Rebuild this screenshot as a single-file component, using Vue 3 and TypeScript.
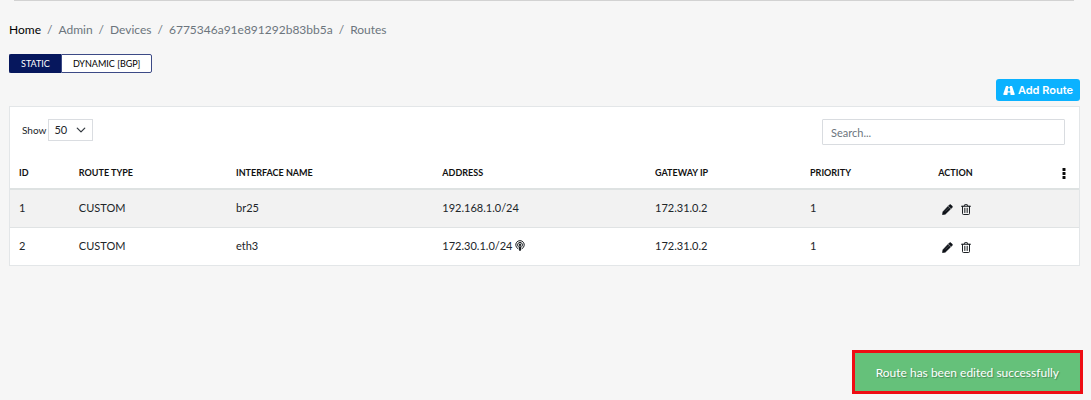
<script setup lang="ts">
import { ref } from 'vue'

interface Route {
  id: number
  type: string
  iface: string
  address: string
  advertised: boolean
  gateway: string
  priority: number
}

const crumbs = ['Admin', 'Devices', '6775346a91e891292b83bb5a', 'Routes']
const pageSize = ref('50')
const search = ref('')
const tab = ref<'static' | 'dynamic'>('static')
const routes: Route[] = [
  { id: 1, type: 'CUSTOM', iface: 'br25', address: '192.168.1.0/24', advertised: false, gateway: '172.31.0.2', priority: 1 },
  { id: 2, type: 'CUSTOM', iface: 'eth3', address: '172.30.1.0/24', advertised: true, gateway: '172.31.0.2', priority: 1 },
]
</script>

<template>
  <div class="page">
    <hr class="rule" />
    <nav class="crumbs" aria-label="Breadcrumb">
      <a href="#" class="home">Home</a>
      <template v-for="c in crumbs" :key="c">
        <span class="sep">/</span><a href="#">{{ c }}</a>
      </template>
    </nav>

    <div class="tabs">
      <button type="button" :class="{ active: tab === 'static' }" @click="tab = 'static'">STATIC</button>
      <button type="button" :class="{ active: tab === 'dynamic' }" @click="tab = 'dynamic'">DYNAMIC [BGP]</button>
    </div>

    <div class="actions">
      <button type="button" class="add">
        <svg viewBox="0 0 576 448" width="12" height="9" aria-hidden="true">
          <path fill="currentColor" d="M152 0h96l-6 64h92L328 0h96q14 0 20 16l128 384q8 48-36 48H366l-12-128H222l-12 128H40Q-4 448 4 400L132 16Q138 0 152 0zM237 118l-10 144h122l-10-144z" />
        </svg>
        <span>Add Route</span>
      </button>
    </div>

    <section class="card">
      <div class="toolbar">
        <label class="show">
          <span>Show</span>
          <span class="select">
            <select v-model="pageSize">
              <option>10</option>
              <option>25</option>
              <option>50</option>
            </select>
            <svg viewBox="0 0 16 16" width="10" height="10" aria-hidden="true">
              <path d="M2 5l6 6 6-6" fill="none" stroke="#343a40" stroke-width="2" stroke-linecap="round" stroke-linejoin="round" />
            </svg>
          </span>
        </label>
        <input v-model="search" class="search" type="text" placeholder="Search..." aria-label="Search" />
      </div>

      <table>
        <colgroup>
          <col class="c-id" /><col class="c-type" /><col class="c-iface" /><col class="c-addr" />
          <col class="c-gw" /><col class="c-prio" /><col class="c-act" /><col class="c-menu" />
        </colgroup>
        <thead>
          <tr>
            <th>ID</th>
            <th>ROUTE TYPE</th>
            <th>INTERFACE NAME</th>
            <th>ADDRESS</th>
            <th>GATEWAY IP</th>
            <th>PRIORITY</th>
            <th>ACTION</th>
            <th class="menu">
              <button type="button" class="icon" aria-label="Columns">
                <svg viewBox="0 0 4 11" width="4" height="11" aria-hidden="true">
                  <g fill="#0b0b0b">
                    <rect x="0.5" width="3" height="3" rx="0.6" />
                    <rect x="0.5" y="4" width="3" height="3" rx="0.6" />
                    <rect x="0.5" y="8" width="3" height="3" rx="0.6" />
                  </g>
                </svg>
              </button>
            </th>
          </tr>
        </thead>
        <tbody>
          <tr v-for="r in routes" :key="r.id">
            <td>{{ r.id }}</td>
            <td>{{ r.type }}</td>
            <td>{{ r.iface }}</td>
            <td>
              <span class="addr">
                {{ r.address }}
                <svg v-if="r.advertised" viewBox="0 0 20 22" width="10" height="11" role="img" aria-label="Advertised">
                  <g fill="none" stroke="#1b1f23" stroke-width="2" stroke-linecap="round">
                    <path d="M6 17.5a8.6 8.6 0 1 1 8 0" />
                    <path d="M6.2 13a5 5 0 1 1 7.6 0" />
                  </g>
                  <circle cx="10" cy="9.5" r="2.5" fill="#1b1f23" />
                  <path d="M7.3 14q0-1.6 2.7-1.6t2.7 1.6l-.9 6.4q-.3 1.4-1.8 1.4t-1.8-1.4z" fill="#1b1f23" />
                </svg>
              </span>
            </td>
            <td>{{ r.gateway }}</td>
            <td>{{ r.priority }}</td>
            <td colspan="2">
              <span class="tools">
                <button type="button" class="icon" aria-label="Edit route">
                  <svg viewBox="0 0 22 22" width="11" height="11" aria-hidden="true">
                    <path d="M14.8 1.8q1.6-1.6 3.2 0l2.2 2.2q1.6 1.6 0 3.2l-2 2-5.4-5.4zM11.8 4.8l5.4 5.4L6.6 20.4.8 21.4l1-5.8z" fill="#0d1117" stroke="#0d1117" stroke-width="1" />
                    <path d="M6.5 15l7-7" stroke="#9a9a9a" stroke-width="0.8" fill="none" />
                  </svg>
                </button>
                <button type="button" class="icon" aria-label="Delete route">
                  <svg viewBox="0 0 20 22" width="10" height="11" aria-hidden="true">
                    <g fill="none" stroke="#1b1f23" stroke-width="2" stroke-linecap="round" stroke-linejoin="round">
                      <path d="M1 4.5h18M6 4.5l1.4-3.1h5.2L14 4.5M3 4.5v14.6q0 1.9 1.9 1.9h10.2q1.9 0 1.9-1.9V4.5" />
                      <path d="M7 8.5v8.5M10 8.5v8.5M13 8.5v8.5" stroke-width="1.4" />
                    </g>
                  </svg>
                </button>
              </span>
            </td>
          </tr>
        </tbody>
      </table>
    </section>

    <div class="toast" role="status">Route has been edited successfully</div>
  </div>
</template>

<style>
body {
  margin: 0;
  background: #f6f6f6;
}
</style>

<style scoped>
.page {
  padding: 0 11px 0 9px;
  font-family: Lato, "Liberation Sans", sans-serif;
  font-size: 11px;
  line-height: 16px;
  color: #212529;
}
button,
input,
select {
  font: inherit;
  color: inherit;
  box-sizing: border-box;
}
button {
  cursor: pointer;
}
.rule {
  height: 1px;
  margin: 0 6px 0 5px;
  border: 0;
  background: #d2d2d2;
}
.crumbs {
  display: flex;
  gap: 6px;
  padding: 21px 0 0;
  font-size: 12px;
  color: #6c757d;
}
.crumbs a {
  color: inherit;
  text-decoration: none;
}
.crumbs .home {
  color: #000;
}
.tabs {
  display: flex;
  margin-top: 16px;
}
.tabs button {
  height: 19px;
  padding: 0 11px;
  border: 1px solid #3c4a86;
  border-radius: 0 2px 2px 0;
  background: #fff;
  font-size: 9px;
  line-height: 16px;
  color: #000;
}
.tabs button:first-child {
  border-radius: 2px 0 0 2px;
  border-right: 0;
}
.tabs button.active {
  background: #06175d;
  border-color: #06175d;
  color: #fff;
}
.actions {
  display: flex;
  justify-content: flex-end;
  margin-top: 6px;
}
.add {
  display: flex;
  align-items: center;
  gap: 3px;
  height: 22px;
  padding: 0 7px;
  border: 0;
  border-radius: 3px;
  background: #0bb2ff;
  color: #fff;
  font-family: Inter, sans-serif;
  font-size: 11px;
  font-weight: 600;
}
.card {
  margin-top: 5px;
  border: 1px solid #e3e6e8;
  background: #fff;
}
.toolbar {
  display: flex;
  align-items: flex-start;
  justify-content: space-between;
  padding: 12px 14px 12px 12px;
}
.show {
  display: flex;
  align-items: center;
  gap: 2px;
  font-size: 10px;
}
.select {
  display: grid;
  align-items: center;
}
.select select,
.select svg {
  grid-area: 1 / 1;
}
.select svg {
  justify-self: end;
  margin-right: 7px;
  pointer-events: none;
}
.select select {
  appearance: none;
  width: 45px;
  height: 22px;
  padding: 0 5px;
  border: 1px solid #dadde1;
  border-radius: 0;
  background: #fff;
  font-size: 11px;
}
.search {
  width: 243px;
  height: 26px;
  padding: 0 8px;
  border: 1px solid #d9dce0;
  border-radius: 1px;
  background: #fff;
}
.search::placeholder {
  color: #6c757d;
  opacity: 1;
}
table {
  width: 100%;
  table-layout: fixed;
  border-collapse: separate;
  border-spacing: 0;
}
.c-id { width: 5.6%; }
.c-type { width: 14.7%; }
.c-iface { width: 19.3%; }
.c-addr { width: 19.9%; }
.c-gw { width: 14.5%; }
.c-prio { width: 12%; }
.c-act { width: 10%; }
.c-menu { width: 4%; }
th,
td {
  height: 37px;
  padding: 0 9px 2px;
  box-sizing: border-box;
  text-align: left;
  white-space: nowrap;
}
th {
  height: 33px;
  padding-bottom: 0;
  border-bottom: 2px solid #dee2e2;
  font-size: 9px;
  font-weight: 700;
  color: #111;
}
td + td,
th + th {
  padding-right: 0;
}
tbody tr:first-child td {
  background: #f2f2f2;
}
tbody tr + tr td {
  height: 38px;
  border-top: 1px solid #e0e3e4;
}
th.menu {
  padding-right: 13px;
  text-align: right;
}
.icon {
  display: inline-flex;
  padding: 0;
  border: 0;
  background: none;
}
th .icon {
  vertical-align: middle;
}
.addr {
  display: inline-flex;
  align-items: center;
  gap: 2px;
}
.tools {
  display: flex;
  align-items: center;
  gap: 8px;
  padding: 3px 0 0 4px;
}
.toast {
  position: fixed;
  right: 8px;
  bottom: 6px;
  padding: 12px 21px 10px;
  border: 3px solid #ee0d14;
  background: #65c17a;
  color: #fff;
  font-size: 12px;
  text-shadow: 1px 1px 1px rgba(0, 0, 0, 0.3);
}
</style>
